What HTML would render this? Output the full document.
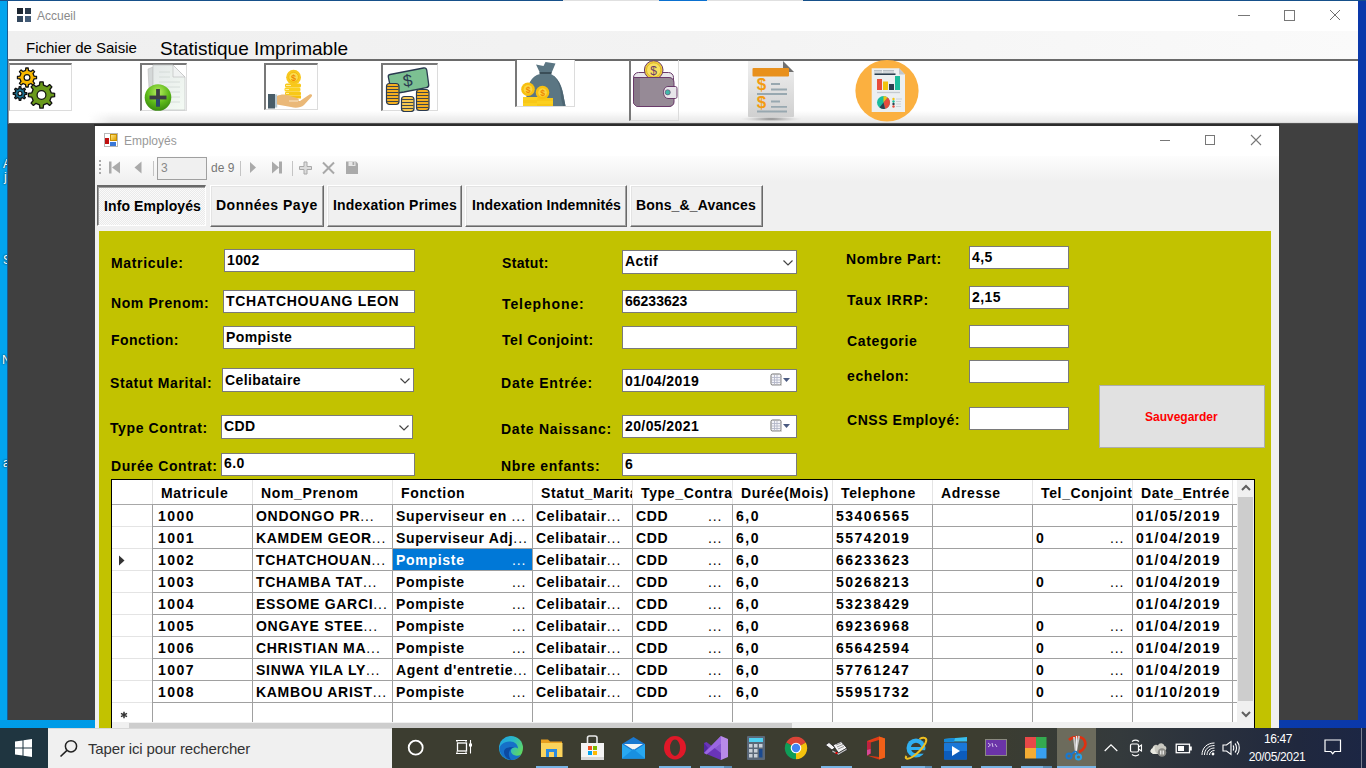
<!DOCTYPE html><html><head><meta charset="utf-8"><style>
*{margin:0;padding:0;box-sizing:border-box}
html,body{width:1366px;height:768px;overflow:hidden;background:#404040;font-family:"Liberation Sans",sans-serif}
.a{position:absolute}
.lbl{position:absolute;font-weight:bold;font-size:14px;line-height:16px;letter-spacing:0.35px;color:#000;white-space:nowrap}
.tx{position:absolute;background:#fff;border:1px solid #7a7a7a;font-weight:bold;font-size:14px;line-height:16px;letter-spacing:0.4px;white-space:nowrap;overflow:hidden;color:#000}
.tx span{position:absolute;left:2px}
.btn{position:absolute;background:#f0f0f0;border-top:1px solid #fff;border-left:1px solid #fff;border-right:1px solid #696969;border-bottom:1px solid #696969;box-shadow:inset -1px -1px 0 #a0a0a0, inset 1px 1px 0 #e3e3e3;font-weight:bold;font-size:14px;line-height:16px;white-space:nowrap;color:#000}
.btn span{position:absolute}
.cell{position:absolute;font-weight:bold;font-size:14px;line-height:16px;white-space:nowrap;color:#000;letter-spacing:0.7px}
.num{letter-spacing:1.5px}
.el{font-weight:normal;letter-spacing:0.9px}
</style></head><body>
<div class="a" style="left:0;top:0;width:8px;height:728px;background:#02a4ee"></div>
<div class="a" style="left:1358px;top:0;width:8px;height:728px;background:#0a38aa"></div>
<div class="a" style="left:0;top:150px;width:8px;height:330px;overflow:hidden;font-size:12px;line-height:14px;color:#fff;text-shadow:0 0 2px #000"><div class="a" style="left:3px;top:7px">A</div><div class="a" style="left:4px;top:20px">j</div><div class="a" style="left:3px;top:103px">S</div><div class="a" style="left:2px;top:203px">N</div><div class="a" style="left:3px;top:306px">a</div></div>
<div class="a" style="left:0;top:720px;width:1366px;height:8px;background:linear-gradient(90deg,#009ce8,#0090dc 45%,#0a40aa 85%,#0a38aa)"></div>
<div class="a" style="left:0;top:0;width:1366px;height:1px;background:#16508a"></div>
<div class="a" style="left:563px;top:0;width:96px;height:1px;background:#e0e0e0"></div>
<div class="a" style="left:659px;top:0;width:48px;height:1px;background:#0a70d0"></div>
<div class="a" style="left:707px;top:0;width:96px;height:1px;background:#e0e0e0"></div>
<div class="a" style="left:7px;top:0;width:1px;height:720px;background:#1a5a90"></div>
<div class="a" style="left:8px;top:1px;width:1350px;height:30px;background:#fff"></div>
<div class="a" style="left:17px;top:8px;width:6px;height:6px;background:#1c2530"></div>
<div class="a" style="left:25px;top:8px;width:6px;height:6px;background:#2a3a4c"></div>
<div class="a" style="left:17px;top:16px;width:6px;height:6px;background:#34485e"></div>
<div class="a" style="left:25px;top:16px;width:6px;height:6px;background:#445c78"></div>
<div class="a" style="left:37px;top:9px;font-size:12px;line-height:14px;color:#8a8a8a">Accueil</div>
<div class="a" style="left:1238px;top:15px;width:12px;height:1px;background:#777"></div>
<div class="a" style="left:1284px;top:10px;width:11px;height:11px;border:1px solid #777"></div>
<svg class="a" style="left:1329px;top:9px" width="13" height="13"><path d="M1 1L11 11M11 1L1 11" stroke="#707070" stroke-width="1"/></svg>
<div class="a" style="left:8px;top:31px;width:1350px;height:29px;background:linear-gradient(90deg,#efefef,#f3f3f3 50%,#fafafa)"></div>
<div class="a" style="left:26px;top:39px;font-size:15px;line-height:17px;color:#000">Fichier de Saisie</div>
<div class="a" style="left:160px;top:38px;font-size:19px;line-height:21px;color:#000">Statistique Imprimable</div>
<div class="a" style="left:8px;top:59px;width:1350px;height:65px;background:#fff;border-top:2px solid #6a6a6a;border-left:1px solid #9a9a9a;border-bottom:1px solid #555"></div>
<div class="a" style="left:88px;top:111px;width:1270px;height:11px;background:linear-gradient(180deg,rgba(255,255,255,0),#e8e8e8);-webkit-mask-image:linear-gradient(90deg,transparent,#000 24px)"></div>
<div class="a" style="left:88px;top:122px;width:1270px;height:1px;background:#dcdcdc;-webkit-mask-image:linear-gradient(90deg,transparent,#000 24px)"></div>
<div class="a" style="left:9px;top:63px;width:63px;height:48px;border-top:2px solid #787878;border-left:1px solid #a0a0a0;border-right:1px solid #dcdcdc;border-bottom:1px solid #dcdcdc;background:#fff"></div>
<div class="a" style="left:140px;top:63px;width:47px;height:48px;border-top:2px solid #787878;border-left:2px solid #787878;border-right:1px solid #dcdcdc;border-bottom:1px solid #dcdcdc;background:#fff"></div>
<div class="a" style="left:264px;top:63px;width:54px;height:47px;border-top:2px solid #787878;border-left:2px solid #787878;border-right:1px solid #dcdcdc;border-bottom:1px solid #dcdcdc;background:#fff"></div>
<div class="a" style="left:381px;top:63px;width:57px;height:48px;border-top:2px solid #787878;border-left:2px solid #787878;border-right:1px solid #dcdcdc;border-bottom:1px solid #dcdcdc;background:#fff"></div>
<div class="a" style="left:515px;top:60px;width:60px;height:47px;border-top:none;border-left:2px solid #787878;border-right:1px solid #dcdcdc;border-bottom:1px solid #dcdcdc;background:#fff"></div>
<svg class="a" style="left:8px;top:60px" width="64" height="54"><path d="M17.54 10.45 L17.80 7.98 L20.20 7.98 L20.46 10.45 L22.95 11.48 L24.88 9.91 L26.59 11.62 L25.02 13.55 L26.05 16.04 L28.52 16.30 L28.52 18.70 L26.05 18.96 L25.02 21.45 L26.59 23.38 L24.88 25.09 L22.95 23.52 L20.46 24.55 L20.20 27.02 L17.80 27.02 L17.54 24.55 L15.05 23.52 L13.12 25.09 L11.41 23.38 L12.98 21.45 L11.95 18.96 L9.48 18.70 L9.48 16.30 L11.95 16.04 L12.98 13.55 L11.41 11.62 L13.12 9.91 L15.05 11.48Z" fill="#f8b800" stroke="#111" stroke-width="1.3" stroke-linejoin="round"/><circle cx="19" cy="17.5" r="2.9" fill="#fff" stroke="#111" stroke-width="1.2"/><path d="M10.99 28.60 L11.15 26.75 L12.85 26.75 L13.01 28.60 L14.75 29.32 L16.17 28.13 L17.37 29.33 L16.18 30.75 L16.90 32.49 L18.75 32.65 L18.75 34.35 L16.90 34.51 L16.18 36.25 L17.37 37.67 L16.17 38.87 L14.75 37.68 L13.01 38.40 L12.85 40.25 L11.15 40.25 L10.99 38.40 L9.25 37.68 L7.83 38.87 L6.63 37.67 L7.82 36.25 L7.10 34.51 L5.25 34.35 L5.25 32.65 L7.10 32.49 L7.82 30.75 L6.63 29.33 L7.83 28.13 L9.25 29.32Z" fill="#1a7090" stroke="#111" stroke-width="1.3" stroke-linejoin="round"/><circle cx="12" cy="33.5" r="2.0" fill="#fff" stroke="#111" stroke-width="1.2"/><path d="M31.47 25.21 L31.85 21.90 L35.15 21.90 L35.53 25.21 L38.99 26.64 L41.59 24.57 L43.93 26.91 L41.86 29.51 L43.29 32.97 L46.60 33.35 L46.60 36.65 L43.29 37.03 L41.86 40.49 L43.93 43.09 L41.59 45.43 L38.99 43.36 L35.53 44.79 L35.15 48.10 L31.85 48.10 L31.47 44.79 L28.01 43.36 L25.41 45.43 L23.07 43.09 L25.14 40.49 L23.71 37.03 L20.40 36.65 L20.40 33.35 L23.71 32.97 L25.14 29.51 L23.07 26.91 L25.41 24.57 L28.01 26.64Z" fill="#6a9a1c" stroke="#111" stroke-width="1.3" stroke-linejoin="round"/><circle cx="33.5" cy="35" r="4.4" fill="#fff" stroke="#111" stroke-width="1.2"/></svg>
<svg class="a" style="left:140px;top:63px" width="47" height="49"><defs><linearGradient id="dg" x1="0" y1="0" x2="1" y2="1"><stop offset="0" stop-color="#e4e8e8"/><stop offset="1" stop-color="#f4fbf4"/></linearGradient><radialGradient id="gg" cx="0.5" cy="0.3" r="0.7"><stop offset="0" stop-color="#b8ee60"/><stop offset="0.6" stop-color="#5cb818"/><stop offset="1" stop-color="#3a8a10"/></radialGradient></defs><path d="M8 6L13 4V44L10 44Z" fill="#d4d8d8" stroke="#bbb" stroke-width="0.6"/><path d="M13 2H33L45 14V47H13Z" fill="url(#dg)" stroke="#c4c8c8" stroke-width="0.8"/><path d="M33 2V14H45Z" fill="#f0f2f2" stroke="#bbb" stroke-width="0.6"/><path d="M19 9H30M19 14H30M19 19H40M19 24H40M19 29H40M19 34H40M19 39H40" stroke="#d0d8d4" stroke-width="0.8"/><circle cx="18" cy="34.5" r="13.3" fill="url(#gg)"/><path d="M9.5 34.5H26.5" stroke="#3c3c44" stroke-width="3.8"/><path d="M18 26V43.5" stroke="#3c3c44" stroke-width="3.8"/><path d="M18 36V43.5" stroke="#2a4870" stroke-width="3.8"/></svg>
<svg class="a" style="left:264px;top:63px" width="54" height="47"><rect x="21" y="20.5" width="16" height="4" rx="1.5" fill="#f8c818"/><rect x="20.5" y="24.5" width="16" height="4" rx="1.5" fill="#fbd020"/><rect x="21" y="28.5" width="16" height="4" rx="1.5" fill="#f8c818"/><rect x="21" y="32.5" width="16" height="3" fill="#f6c010"/><path d="M22 22.5H27M21.5 26.5H25M22 30.5H25" stroke="#fff3b0" stroke-width="0.9"/><circle cx="29.6" cy="14.2" r="7.4" fill="#f8c820"/><circle cx="29.6" cy="14.2" r="4.8" fill="#fbdc50" stroke="#f0b800" stroke-width="0.8"/><text x="29.6" y="17.6" font-family="Liberation Sans" font-weight="bold" font-size="9" fill="#f08a00" text-anchor="middle">$</text><rect x="4" y="31" width="7" height="14.5" fill="#485c68"/><rect x="11" y="31.5" width="2.2" height="13" fill="#b8c8d0"/><path d="M13 33C17 31 22 31 26 33L33 35C36 36 35 39 32 38.5L25 38H36L45.5 31.5C47.5 30.5 49 32 47.5 33.8L40 42C37 44.5 32 45.5 27 44L13 41.5Z" fill="#eab878"/><path d="M25 38H34" stroke="#fff4e0" stroke-width="0.8"/></svg>
<svg class="a" style="left:381px;top:63px" width="58" height="49"><path d="M9 11.5L42.5 5C44.5 4.7 45.5 5.5 45.8 7.3L47.7 21.5C48 23.5 47.2 24.3 45.3 24.6L23 29L13.5 30.5C11.5 30.8 10.5 30 10.2 28.2L7.3 14C7 12.3 7.5 11.8 9 11.5Z" fill="#7cc092" stroke="#2a3a50" stroke-width="1.3"/><text x="26.5" y="23.5" font-family="Liberation Sans" font-size="17" fill="#2a3a50" text-anchor="middle" transform="rotate(-8 26.5 17)">$</text><rect x="5.5" y="20.5" width="12.5" height="21" rx="3" fill="#f5b020" stroke="#2a3a50" stroke-width="1.2"/><path d="M6.1 23.5H17.4" stroke="#2a3a50" stroke-width="0.9" fill="none"/><path d="M6.1 26.5H17.4" stroke="#2a3a50" stroke-width="0.9" fill="none"/><path d="M6.1 29.5H17.4" stroke="#2a3a50" stroke-width="0.9" fill="none"/><path d="M6.1 32.5H17.4" stroke="#2a3a50" stroke-width="0.9" fill="none"/><path d="M6.1 35.5H17.4" stroke="#2a3a50" stroke-width="0.9" fill="none"/><path d="M6.1 38.5H17.4" stroke="#2a3a50" stroke-width="0.9" fill="none"/><rect x="20.5" y="33.5" width="12.5" height="15" rx="3" fill="#f6c850" stroke="#2a3a50" stroke-width="1.2"/><path d="M21.1 36.5H32.4" stroke="#2a3a50" stroke-width="0.9" fill="none"/><path d="M21.1 39.5H32.4" stroke="#2a3a50" stroke-width="0.9" fill="none"/><path d="M21.1 42.5H32.4" stroke="#2a3a50" stroke-width="0.9" fill="none"/><path d="M21.1 45.5H32.4" stroke="#2a3a50" stroke-width="0.9" fill="none"/><rect x="35.5" y="26.5" width="12.5" height="21" rx="3" fill="#f5b020" stroke="#2a3a50" stroke-width="1.2"/><path d="M36.1 29.5H47.4" stroke="#2a3a50" stroke-width="0.9" fill="none"/><path d="M36.1 32.5H47.4" stroke="#2a3a50" stroke-width="0.9" fill="none"/><path d="M36.1 35.5H47.4" stroke="#2a3a50" stroke-width="0.9" fill="none"/><path d="M36.1 38.5H47.4" stroke="#2a3a50" stroke-width="0.9" fill="none"/><path d="M36.1 41.5H47.4" stroke="#2a3a50" stroke-width="0.9" fill="none"/><path d="M36.1 44.5H47.4" stroke="#2a3a50" stroke-width="0.9" fill="none"/></svg>
<svg class="a" style="left:515px;top:60px" width="60" height="47"><path d="M21 4.5L28.5 6L30.5 2L40.5 3.5L36.5 13H25Z" fill="#5b7683"/><path d="M24.5 13H36.5" stroke="#3a4e58" stroke-width="2"/><path d="M25 14C16 16 12 26 11.5 34L11 46H50.5L49.5 41C48 33 47 20 36 14Z" fill="#5b7683"/><path d="M36 14C43 18 46 28 46 38L48 46H50.5L49.5 41C48 33 46 19 36 14Z" fill="#4d6572"/><rect x="8" y="37" width="16" height="3" fill="#fbd020"/><rect x="8" y="40" width="16" height="3" fill="#f8c818"/><rect x="8" y="43" width="16" height="3" fill="#fbd020"/><rect x="22" y="38" width="16" height="3" fill="#f8c818"/><rect x="22" y="41" width="16" height="3" fill="#fbd020"/><rect x="22" y="44" width="16" height="2" fill="#f8c818"/><circle cx="13" cy="29.2" r="6.8" fill="#f8c010"/><circle cx="13" cy="29.2" r="4.3" fill="#fbd640"/><text x="13" y="32.5" font-family="Liberation Sans" font-weight="bold" font-size="8.5" fill="#f08a00" text-anchor="middle">$</text><circle cx="27.5" cy="32.5" r="6.8" fill="#f8c010"/><circle cx="27.5" cy="32.5" r="4.3" fill="#fbd640"/><text x="27.5" y="35.8" font-family="Liberation Sans" font-weight="bold" font-size="8.5" fill="#f08a00" text-anchor="middle">$</text></svg>
<svg class="a" style="left:629px;top:58px" width="52" height="64"><rect x="4.5" y="14.5" width="40" height="34" rx="5" fill="#e8e6ea" stroke="#6a3a6a" stroke-width="1"/><circle cx="24.7" cy="12" r="9.3" fill="#f0cc40" stroke="#6a3a6a" stroke-width="1"/><circle cx="24.7" cy="12" r="7.2" fill="#f8e060" stroke="#d8b020" stroke-width="0.8"/><text x="24.7" y="16.5" font-family="Liberation Sans" font-size="12" fill="#6a3a6a" text-anchor="middle">$</text><path d="M4.5 19.5H40C43 19.5 45 21.5 45 24.5V44C45 46.5 43 48.5 40 48.5H10C7 48.5 4.5 46.5 4.5 43.5Z" fill="#968a96" stroke="#6a3a6a" stroke-width="1"/><path d="M5 20V44C5 46 7 48 9 48H11V20Z" fill="#887a88"/><path d="M39 28.5H46.5C47.5 28.5 48 29.5 48 30.5V38.5C48 39.5 47.5 40.5 46.5 40.5H39C36.5 40.5 34.5 38 34.5 34.5C34.5 31 36.5 28.5 39 28.5Z" fill="#e8e6ea" stroke="#6a3a6a" stroke-width="1"/><circle cx="38.7" cy="34.3" r="2.6" fill="#40b8a8" stroke="#6a3a6a" stroke-width="0.6"/></svg>
<div class="a" style="left:629px;top:60px;width:50px;height:61px;border-left:2px solid #787878;border-right:1px solid #dcdcdc;border-bottom:1px solid #dcdcdc"></div>
<svg class="a" style="left:738px;top:60px" width="66" height="64"><defs><linearGradient id="pg" x1="0" y1="0" x2="0" y2="1"><stop offset="0" stop-color="#f0f0f0"/><stop offset="1" stop-color="#d0d0d0"/></linearGradient><radialGradient id="sh" cx="0.5" cy="0.5" r="0.5"><stop offset="0" stop-color="#808080"/><stop offset="1" stop-color="#d0d0d0" stop-opacity="0"/></radialGradient></defs><ellipse cx="33" cy="59" rx="31" ry="3" fill="url(#sh)"/><path d="M10 1H45L56 12V56C56 56.5 55.5 57 55 57H11C10.5 57 10 56.5 10 56Z" fill="url(#pg)"/><path d="M45 1L56 12H45Z" fill="#707070"/><rect x="14.5" y="8" width="36.5" height="8.5" rx="1" fill="#e8901c"/><text x="23.5" y="30" font-family="Liberation Sans" font-weight="bold" font-size="17" fill="#f39c12" text-anchor="middle">$</text><text x="23.5" y="47.5" font-family="Liberation Sans" font-weight="bold" font-size="17" fill="#f39c12" text-anchor="middle">$</text><path d="M33 24H42M33 29.5H49M19 34H49M33 41.5H42M33 46.8H49M19 51.5H49" stroke="#98a8b0" stroke-width="1.8"/></svg>
<svg class="a" style="left:854px;top:58px" width="66" height="66"><ellipse cx="33" cy="32.7" rx="31.6" ry="30.8" fill="#fbb040"/><path d="M17.7 10.2H45L51 16.5V54H17.7Z" fill="#eceff1"/><path d="M45 10.2L51 16.5H45Z" fill="#c0c6cc"/><path d="M20 12.5H28M29 12.5H40M20 14H28M29 14H40" stroke="#b8bec4" stroke-width="1"/><path d="M20.5 16.2H41.5" stroke="#2c3e50" stroke-width="1.6"/><rect x="23" y="21" width="5" height="11" fill="#e74c3c"/><rect x="29" y="23.5" width="5" height="8.5" fill="#f1c40f"/><rect x="35" y="26" width="5" height="6" fill="#2c3e50"/><rect x="41" y="18" width="5" height="14" fill="#1abc9c"/><path d="M23 34.5H46" stroke="#c4cacf" stroke-width="1.3"/><circle cx="29.5" cy="44.5" r="6.5" fill="#1abc9c"/><path d="M29.5 44.5L29.5 38A6.5 6.5 0 0 1 33.6 39.5Z" fill="#f1c40f"/><path d="M29.5 44.5L33.6 39.5A6.5 6.5 0 0 1 31 50.8Z" fill="#e74c3c"/><path d="M29.5 44.5L31 50.8A6.5 6.5 0 0 1 25.5 49.5Z" fill="#2c3e50"/><circle cx="39.5" cy="41" r="1.2" fill="#f1c40f"/><circle cx="39.5" cy="43.5" r="1.2" fill="#1abc9c"/><circle cx="39.5" cy="46" r="1.2" fill="#2c3e50"/><circle cx="39.5" cy="48.5" r="1.2" fill="#e74c3c"/><path d="M42 41H48M42 43.5H47M42 46H47M42 48.5H47" stroke="#c4cacf" stroke-width="0.8"/></svg>
<div class="a" style="left:94px;top:124px;width:1186px;height:2px;background:#2c2c2c"></div>
<div class="a" style="left:95px;top:126px;width:1184px;height:602px;background:#f0f0f0"></div>
<div class="a" style="left:95px;top:126px;width:1184px;height:30px;background:#fff"></div>
<div class="a" style="left:104px;top:133px;width:14px;height:14px;border:1px solid #b8b8b8;background:#fff"></div>
<div class="a" style="left:110px;top:134px;width:7px;height:7px;background:linear-gradient(135deg,#ffe680,#e0a000);border:1px solid #c89000"></div>
<div class="a" style="left:105px;top:138px;width:4px;height:6px;background:#c01010"></div>
<div class="a" style="left:110px;top:142px;width:6px;height:4px;background:#3a78d8"></div>
<div class="a" style="left:124px;top:134px;font-size:12px;line-height:14px;color:#999">Employés</div>
<div class="a" style="left:1160px;top:140px;width:10px;height:1px;background:#777"></div>
<div class="a" style="left:1205px;top:135px;width:10px;height:10px;border:1px solid #777"></div>
<svg class="a" style="left:1250px;top:134px" width="12" height="12"><path d="M1 1L11 11M11 1L1 11" stroke="#777" stroke-width="1.1"/></svg>
<div class="a" style="left:95px;top:156px;width:1184px;height:26px;background:linear-gradient(180deg,#fdfdfd,#f0f0f0)"></div>
<div class="a" style="left:99px;top:160px;width:2px;height:2px;background:#a8a8a8"></div>
<div class="a" style="left:99px;top:164px;width:2px;height:2px;background:#a8a8a8"></div>
<div class="a" style="left:99px;top:168px;width:2px;height:2px;background:#a8a8a8"></div>
<div class="a" style="left:99px;top:172px;width:2px;height:2px;background:#a8a8a8"></div>
<svg class="a" style="left:106px;top:159px" width="260" height="18"><rect x="3" y="2.5" width="2.5" height="12" fill="#aaaaaa"/><path d="M14 2.5L6 8.5L14 14.5Z" fill="#aaaaaa"/><path d="M35.5 2.5L28.5 8.5L35.5 14.5Z" fill="#aaaaaa"/><rect x="47" y="2" width="1" height="15" fill="#c4c4c4"/><path d="M144 3L150 8.5L144 14Z" fill="#aaaaaa"/><path d="M166 2.5L173 8.5L166 14.5Z" fill="#aaaaaa"/><rect x="173" y="2.5" width="3" height="12" fill="#aaaaaa"/><rect x="134" y="2" width="1" height="15" fill="#c4c4c4"/><rect x="186" y="2" width="1" height="15" fill="#c4c4c4"/><path d="M198 3H201V7.5H205.5V10.5H201V15H198V10.5H193.5V7.5H198Z" fill="#dcdcdc" stroke="#a8a8a8" stroke-width="1"/><path d="M217 3.5L228 14.5M228 3.5L217 14.5" stroke="#a8a8a8" stroke-width="2"/><path d="M240 2.5H250L252 4.5V15H240Z" fill="#aaaaaa"/><rect x="242.5" y="2.5" width="7" height="4.5" fill="#e8e8e8"/><rect x="246.5" y="3" width="1.8" height="3" fill="#aaaaaa"/></svg>
<div class="a" style="left:157px;top:157px;width:50px;height:23px;border:1px solid #a0a0a0;background:#f0f0f0;font-size:12px;line-height:20px;color:#888;padding-left:3px">3</div>
<div class="a" style="left:211px;top:161px;font-size:12px;line-height:14px;color:#777">de 9</div>
<div class="a" style="left:97px;top:185px;width:109px;height:41px;background:repeating-conic-gradient(#fafafa 0 25%,#eaeaea 0 50%) 0 0/2px 2px;border-top:2px solid #696969;border-left:1px solid #696969;border-right:1px solid #fff;border-bottom:1px solid #fff;box-shadow:inset 1px 1px 0 #a0a0a0"></div>
<div class="lbl" style="left:104px;top:198px;letter-spacing:0.1px">Info Employés</div>
<div class="btn" style="left:210px;top:185px;width:114px;height:42px"></div>
<div class="lbl" style="left:216px;top:197px;letter-spacing:0.5px">Données Paye</div>
<div class="btn" style="left:327px;top:185px;width:135px;height:42px"></div>
<div class="lbl" style="left:333px;top:197px;letter-spacing:0.2px">Indexation Primes</div>
<div class="btn" style="left:465px;top:185px;width:162px;height:42px"></div>
<div class="lbl" style="left:472px;top:197px;letter-spacing:0.05px">Indexation Indemnités</div>
<div class="btn" style="left:630px;top:185px;width:133px;height:42px"></div>
<div class="lbl" style="left:636px;top:197px;letter-spacing:0.15px">Bons_&amp;_Avances</div>
<div class="a" style="left:99px;top:231px;width:1172px;height:497px;background:#c2c200"></div>
<div class="lbl" style="left:111px;top:255px;letter-spacing:0.65px">Matricule:</div>
<div class="tx" style="left:224px;top:249px;width:191px;height:23px"><span style="top:2px;letter-spacing:0.4px">1002</span></div>
<div class="lbl" style="left:111px;top:295px;letter-spacing:0.6px">Nom Prenom:</div>
<div class="tx" style="left:223px;top:290px;width:192px;height:23px"><span style="top:2px;letter-spacing:0.7px">TCHATCHOUANG LEON</span></div>
<div class="lbl" style="left:111px;top:332px;letter-spacing:0.45px">Fonction:</div>
<div class="tx" style="left:223px;top:326px;width:192px;height:23px"><span style="top:2px;letter-spacing:0.4px">Pompiste</span></div>
<div class="lbl" style="left:110px;top:375px;letter-spacing:0.6px">Statut Marital:</div>
<div class="tx" style="left:222px;top:368px;width:192px;height:24px"><span style="top:3px;letter-spacing:0.4px">Celibataire</span></div>
<svg class="a" style="left:400px;top:378px" width="10" height="6"><path d="M0.5 0.5L5 5L9.5 0.5" stroke="#444" stroke-width="1.2" fill="none"/></svg>
<div class="lbl" style="left:110px;top:420px;letter-spacing:0.6px">Type Contrat:</div>
<div class="tx" style="left:221px;top:415px;width:192px;height:24px"><span style="top:2px;letter-spacing:0.4px">CDD</span></div>
<svg class="a" style="left:399px;top:425px" width="10" height="6"><path d="M0.5 0.5L5 5L9.5 0.5" stroke="#444" stroke-width="1.2" fill="none"/></svg>
<div class="lbl" style="left:111px;top:458px;letter-spacing:0.6px">Durée Contrat:</div>
<div class="tx" style="left:221px;top:453px;width:194px;height:23px"><span style="top:1px;letter-spacing:0.4px">6.0</span></div>
<div class="lbl" style="left:502px;top:255px;letter-spacing:0.35px">Statut:</div>
<div class="tx" style="left:622px;top:250px;width:175px;height:24px"><span style="top:2px;letter-spacing:0.4px">Actif</span></div>
<svg class="a" style="left:783px;top:260px" width="10" height="6"><path d="M0.5 0.5L5 5L9.5 0.5" stroke="#444" stroke-width="1.2" fill="none"/></svg>
<div class="lbl" style="left:502px;top:296px;letter-spacing:0.9px">Telephone:</div>
<div class="tx" style="left:622px;top:290px;width:175px;height:23px"><span style="top:2px;letter-spacing:0.0px">66233623</span></div>
<div class="lbl" style="left:502px;top:332px;letter-spacing:0.55px">Tel Conjoint:</div>
<div class="tx" style="left:622px;top:326px;width:175px;height:23px"><span style="top:2px;letter-spacing:0.4px"></span></div>
<div class="lbl" style="left:501px;top:375px;letter-spacing:0.8px">Date Entrée:</div>
<div class="tx" style="left:622px;top:369px;width:175px;height:23px"><span style="top:3px;letter-spacing:0.4px">01/04/2019</span></div>
<svg class="a" style="left:770px;top:373px" width="22" height="14"><rect x="1" y="1" width="10" height="11" rx="1.5" fill="#f4f4f8" stroke="#707070" stroke-width="1"/><path d="M2 4.5H10M2 7H10M2 9.5H10M4.5 2V11.5M7 2V11.5" stroke="#b4b8c8" stroke-width="0.9"/><path d="M11.5 4V12.5H3" stroke="#c8c8c8" stroke-width="0.8" fill="none"/><path d="M13 5H20L16.5 9Z" fill="#4a5a80"/></svg>
<div class="lbl" style="left:501px;top:421px;letter-spacing:0.75px">Date Naissanc:</div>
<div class="tx" style="left:622px;top:415px;width:175px;height:23px"><span style="top:2px;letter-spacing:0.4px">20/05/2021</span></div>
<svg class="a" style="left:770px;top:419px" width="22" height="14"><rect x="1" y="1" width="10" height="11" rx="1.5" fill="#f4f4f8" stroke="#707070" stroke-width="1"/><path d="M2 4.5H10M2 7H10M2 9.5H10M4.5 2V11.5M7 2V11.5" stroke="#b4b8c8" stroke-width="0.9"/><path d="M11.5 4V12.5H3" stroke="#c8c8c8" stroke-width="0.8" fill="none"/><path d="M13 5H20L16.5 9Z" fill="#4a5a80"/></svg>
<div class="lbl" style="left:501px;top:458px;letter-spacing:0.7px">Nbre enfants:</div>
<div class="tx" style="left:622px;top:453px;width:175px;height:23px"><span style="top:2px;letter-spacing:0.4px">6</span></div>
<div class="lbl" style="left:846px;top:251px;letter-spacing:0.6px">Nombre Part:</div>
<div class="tx" style="left:969px;top:246px;width:100px;height:23px"><span style="top:2px;letter-spacing:0.4px">4,5</span></div>
<div class="lbl" style="left:847px;top:292px;letter-spacing:0.85px">Taux IRRP:</div>
<div class="tx" style="left:969px;top:286px;width:100px;height:23px"><span style="top:2px;letter-spacing:0.4px">2,15</span></div>
<div class="lbl" style="left:847px;top:333px;letter-spacing:0.65px">Categorie</div>
<div class="tx" style="left:969px;top:325px;width:100px;height:23px"><span style="top:3px;letter-spacing:0.4px"></span></div>
<div class="lbl" style="left:847px;top:368px;letter-spacing:0.6px">echelon:</div>
<div class="tx" style="left:969px;top:360px;width:100px;height:23px"><span style="top:4px;letter-spacing:0.4px"></span></div>
<div class="lbl" style="left:847px;top:412px;letter-spacing:0.55px">CNSS Employé:</div>
<div class="tx" style="left:969px;top:407px;width:100px;height:23px"><span style="top:1px;letter-spacing:0.4px"></span></div>
<div class="a" style="left:1099px;top:385px;width:166px;height:63px;background:#e1e1e1;border:1px solid #adadad"></div>
<div class="a" style="left:1145px;top:410px;font-weight:bold;font-size:12px;line-height:14px;color:#ff0000;letter-spacing:0px">Sauvegarder</div>
<div class="a" style="left:111px;top:479px;width:1144px;height:260px;background:#fff;border:1px solid #000"></div>
<div class="a" style="left:152px;top:480px;width:1px;height:24px;background:#e4e4e4"></div>
<div class="a" style="left:252px;top:480px;width:1px;height:24px;background:#e4e4e4"></div>
<div class="a" style="left:392px;top:480px;width:1px;height:24px;background:#e4e4e4"></div>
<div class="a" style="left:532px;top:480px;width:1px;height:24px;background:#e4e4e4"></div>
<div class="a" style="left:632px;top:480px;width:1px;height:24px;background:#e4e4e4"></div>
<div class="a" style="left:732px;top:480px;width:1px;height:24px;background:#e4e4e4"></div>
<div class="a" style="left:832px;top:480px;width:1px;height:24px;background:#e4e4e4"></div>
<div class="a" style="left:932px;top:480px;width:1px;height:24px;background:#e4e4e4"></div>
<div class="a" style="left:1032px;top:480px;width:1px;height:24px;background:#e4e4e4"></div>
<div class="a" style="left:1132px;top:480px;width:1px;height:24px;background:#e4e4e4"></div>
<div class="a" style="left:1232px;top:480px;width:1px;height:24px;background:#e4e4e4"></div>
<div class="a" style="left:112px;top:504px;width:1125px;height:1px;background:#a0a0a0"></div>
<div class="a" style="left:112px;top:504px;width:40px;height:1px;background:#a8a8a8"></div>
<div class="a" style="left:153px;top:480px;width:99px;height:24px;overflow:hidden"><div class="cell" style="left:8px;top:5px;letter-spacing:0.65px">Matricule</div></div>
<div class="a" style="left:253px;top:480px;width:139px;height:24px;overflow:hidden"><div class="cell" style="left:8px;top:5px;letter-spacing:0.65px">Nom_Prenom</div></div>
<div class="a" style="left:393px;top:480px;width:139px;height:24px;overflow:hidden"><div class="cell" style="left:8px;top:5px;letter-spacing:0.65px">Fonction</div></div>
<div class="a" style="left:533px;top:480px;width:99px;height:24px;overflow:hidden"><div class="cell" style="left:8px;top:5px;letter-spacing:0.65px">Statut_Marital</div></div>
<div class="a" style="left:633px;top:480px;width:99px;height:24px;overflow:hidden"><div class="cell" style="left:8px;top:5px;letter-spacing:0.65px">Type_Contrat</div></div>
<div class="a" style="left:733px;top:480px;width:99px;height:24px;overflow:hidden"><div class="cell" style="left:8px;top:5px;letter-spacing:0.65px">Durée(Mois)</div></div>
<div class="a" style="left:833px;top:480px;width:99px;height:24px;overflow:hidden"><div class="cell" style="left:8px;top:5px;letter-spacing:0.65px">Telephone</div></div>
<div class="a" style="left:933px;top:480px;width:99px;height:24px;overflow:hidden"><div class="cell" style="left:8px;top:5px;letter-spacing:0.65px">Adresse</div></div>
<div class="a" style="left:1033px;top:480px;width:99px;height:24px;overflow:hidden"><div class="cell" style="left:8px;top:5px;letter-spacing:0.65px">Tel_Conjoint</div></div>
<div class="a" style="left:1133px;top:480px;width:99px;height:24px;overflow:hidden"><div class="cell" style="left:8px;top:5px;letter-spacing:0.65px">Date_Entrée</div></div>
<div class="a" style="left:152px;top:526px;width:1085px;height:1px;background:#a0a0a0"></div>
<div class="a" style="left:112px;top:526px;width:40px;height:1px;background:#e4e4e4"></div>
<div class="a" style="left:152px;top:548px;width:1085px;height:1px;background:#a0a0a0"></div>
<div class="a" style="left:112px;top:548px;width:40px;height:1px;background:#e4e4e4"></div>
<div class="a" style="left:152px;top:570px;width:1085px;height:1px;background:#a0a0a0"></div>
<div class="a" style="left:112px;top:570px;width:40px;height:1px;background:#e4e4e4"></div>
<div class="a" style="left:152px;top:592px;width:1085px;height:1px;background:#a0a0a0"></div>
<div class="a" style="left:112px;top:592px;width:40px;height:1px;background:#e4e4e4"></div>
<div class="a" style="left:152px;top:614px;width:1085px;height:1px;background:#a0a0a0"></div>
<div class="a" style="left:112px;top:614px;width:40px;height:1px;background:#e4e4e4"></div>
<div class="a" style="left:152px;top:636px;width:1085px;height:1px;background:#a0a0a0"></div>
<div class="a" style="left:112px;top:636px;width:40px;height:1px;background:#e4e4e4"></div>
<div class="a" style="left:152px;top:658px;width:1085px;height:1px;background:#a0a0a0"></div>
<div class="a" style="left:112px;top:658px;width:40px;height:1px;background:#e4e4e4"></div>
<div class="a" style="left:152px;top:680px;width:1085px;height:1px;background:#a0a0a0"></div>
<div class="a" style="left:112px;top:680px;width:40px;height:1px;background:#e4e4e4"></div>
<div class="a" style="left:152px;top:702px;width:1085px;height:1px;background:#a0a0a0"></div>
<div class="a" style="left:112px;top:702px;width:40px;height:1px;background:#e4e4e4"></div>
<div class="a" style="left:152px;top:724px;width:1085px;height:1px;background:#a0a0a0"></div>
<div class="a" style="left:112px;top:724px;width:40px;height:1px;background:#e4e4e4"></div>
<div class="a" style="left:152px;top:505px;width:1px;height:217px;background:#a0a0a0"></div>
<div class="a" style="left:252px;top:505px;width:1px;height:217px;background:#a0a0a0"></div>
<div class="a" style="left:392px;top:505px;width:1px;height:217px;background:#a0a0a0"></div>
<div class="a" style="left:532px;top:505px;width:1px;height:217px;background:#a0a0a0"></div>
<div class="a" style="left:632px;top:505px;width:1px;height:217px;background:#a0a0a0"></div>
<div class="a" style="left:732px;top:505px;width:1px;height:217px;background:#a0a0a0"></div>
<div class="a" style="left:832px;top:505px;width:1px;height:217px;background:#a0a0a0"></div>
<div class="a" style="left:932px;top:505px;width:1px;height:217px;background:#a0a0a0"></div>
<div class="a" style="left:1032px;top:505px;width:1px;height:217px;background:#a0a0a0"></div>
<div class="a" style="left:1132px;top:505px;width:1px;height:217px;background:#a0a0a0"></div>
<div class="a" style="left:1232px;top:505px;width:1px;height:217px;background:#a0a0a0"></div>
<div class="a" style="left:152px;top:505px;width:1px;height:217px;background:#a0a0a0"></div>
<div class="a" style="left:393px;top:549px;width:139px;height:21px;background:#0078d7"></div>
<div class="cell num" style="left:158px;top:508px;color:#000">1000</div>
<div class="cell" style="left:256px;top:508px;color:#000">ONDONGO PR<span class="el">...</span></div>
<div class="cell" style="left:396px;top:508px;color:#000">Superviseur en <span class="el">...</span></div>
<div class="cell" style="left:536px;top:508px;color:#000">Celibatair<span class="el">...</span></div>
<div class="cell" style="left:636px;top:508px;color:#000">CDD</div>
<div class="cell num" style="left:736px;top:508px;color:#000">6,0</div>
<div class="cell num" style="left:836px;top:508px;color:#000">53406565</div>
<div class="cell num" style="left:1136px;top:508px;color:#000">01/05/2019</div>
<div class="cell el" style="left:708px;top:508px;color:#000">...</div>
<div class="cell num" style="left:158px;top:530px;color:#000">1001</div>
<div class="cell" style="left:256px;top:530px;color:#000">KAMDEM GEOR<span class="el">...</span></div>
<div class="cell" style="left:396px;top:530px;color:#000">Superviseur Adj<span class="el">...</span></div>
<div class="cell" style="left:536px;top:530px;color:#000">Celibatair<span class="el">...</span></div>
<div class="cell" style="left:636px;top:530px;color:#000">CDD</div>
<div class="cell num" style="left:736px;top:530px;color:#000">6,0</div>
<div class="cell num" style="left:836px;top:530px;color:#000">55742019</div>
<div class="cell num" style="left:1036px;top:530px;color:#000">0</div>
<div class="cell num" style="left:1136px;top:530px;color:#000">01/04/2019</div>
<div class="cell el" style="left:708px;top:530px;color:#000">...</div>
<div class="cell el" style="left:1110px;top:530px;color:#000">...</div>
<div class="cell num" style="left:158px;top:552px;color:#000">1002</div>
<div class="cell" style="left:256px;top:552px;color:#000">TCHATCHOUAN<span class="el">...</span></div>
<div class="cell" style="left:396px;top:552px;color:#fff">Pompiste</div>
<div class="cell" style="left:536px;top:552px;color:#000">Celibatair<span class="el">...</span></div>
<div class="cell" style="left:636px;top:552px;color:#000">CDD</div>
<div class="cell num" style="left:736px;top:552px;color:#000">6,0</div>
<div class="cell num" style="left:836px;top:552px;color:#000">66233623</div>
<div class="cell num" style="left:1136px;top:552px;color:#000">01/04/2019</div>
<div class="cell el" style="left:512px;top:552px;color:#fff">...</div>
<div class="cell el" style="left:708px;top:552px;color:#000">...</div>
<div class="cell num" style="left:158px;top:574px;color:#000">1003</div>
<div class="cell" style="left:256px;top:574px;color:#000">TCHAMBA TAT<span class="el">...</span></div>
<div class="cell" style="left:396px;top:574px;color:#000">Pompiste</div>
<div class="cell" style="left:536px;top:574px;color:#000">Celibatair<span class="el">...</span></div>
<div class="cell" style="left:636px;top:574px;color:#000">CDD</div>
<div class="cell num" style="left:736px;top:574px;color:#000">6,0</div>
<div class="cell num" style="left:836px;top:574px;color:#000">50268213</div>
<div class="cell num" style="left:1036px;top:574px;color:#000">0</div>
<div class="cell num" style="left:1136px;top:574px;color:#000">01/04/2019</div>
<div class="cell el" style="left:512px;top:574px;color:#000">...</div>
<div class="cell el" style="left:708px;top:574px;color:#000">...</div>
<div class="cell el" style="left:1110px;top:574px;color:#000">...</div>
<div class="cell num" style="left:158px;top:596px;color:#000">1004</div>
<div class="cell" style="left:256px;top:596px;color:#000">ESSOME GARCI<span class="el">...</span></div>
<div class="cell" style="left:396px;top:596px;color:#000">Pompiste</div>
<div class="cell" style="left:536px;top:596px;color:#000">Celibatair<span class="el">...</span></div>
<div class="cell" style="left:636px;top:596px;color:#000">CDD</div>
<div class="cell num" style="left:736px;top:596px;color:#000">6,0</div>
<div class="cell num" style="left:836px;top:596px;color:#000">53238429</div>
<div class="cell num" style="left:1136px;top:596px;color:#000">01/04/2019</div>
<div class="cell el" style="left:512px;top:596px;color:#000">...</div>
<div class="cell el" style="left:708px;top:596px;color:#000">...</div>
<div class="cell num" style="left:158px;top:618px;color:#000">1005</div>
<div class="cell" style="left:256px;top:618px;color:#000">ONGAYE STEE<span class="el">...</span></div>
<div class="cell" style="left:396px;top:618px;color:#000">Pompiste</div>
<div class="cell" style="left:536px;top:618px;color:#000">Celibatair<span class="el">...</span></div>
<div class="cell" style="left:636px;top:618px;color:#000">CDD</div>
<div class="cell num" style="left:736px;top:618px;color:#000">6,0</div>
<div class="cell num" style="left:836px;top:618px;color:#000">69236968</div>
<div class="cell num" style="left:1036px;top:618px;color:#000">0</div>
<div class="cell num" style="left:1136px;top:618px;color:#000">01/04/2019</div>
<div class="cell el" style="left:512px;top:618px;color:#000">...</div>
<div class="cell el" style="left:708px;top:618px;color:#000">...</div>
<div class="cell el" style="left:1110px;top:618px;color:#000">...</div>
<div class="cell num" style="left:158px;top:640px;color:#000">1006</div>
<div class="cell" style="left:256px;top:640px;color:#000">CHRISTIAN MA<span class="el">...</span></div>
<div class="cell" style="left:396px;top:640px;color:#000">Pompiste</div>
<div class="cell" style="left:536px;top:640px;color:#000">Celibatair<span class="el">...</span></div>
<div class="cell" style="left:636px;top:640px;color:#000">CDD</div>
<div class="cell num" style="left:736px;top:640px;color:#000">6,0</div>
<div class="cell num" style="left:836px;top:640px;color:#000">65642594</div>
<div class="cell num" style="left:1036px;top:640px;color:#000">0</div>
<div class="cell num" style="left:1136px;top:640px;color:#000">01/04/2019</div>
<div class="cell el" style="left:512px;top:640px;color:#000">...</div>
<div class="cell el" style="left:708px;top:640px;color:#000">...</div>
<div class="cell el" style="left:1110px;top:640px;color:#000">...</div>
<div class="cell num" style="left:158px;top:662px;color:#000">1007</div>
<div class="cell" style="left:256px;top:662px;color:#000">SINWA YILA LY<span class="el">...</span></div>
<div class="cell" style="left:396px;top:662px;color:#000">Agent d'entretie<span class="el">...</span></div>
<div class="cell" style="left:536px;top:662px;color:#000">Celibatair<span class="el">...</span></div>
<div class="cell" style="left:636px;top:662px;color:#000">CDD</div>
<div class="cell num" style="left:736px;top:662px;color:#000">6,0</div>
<div class="cell num" style="left:836px;top:662px;color:#000">57761247</div>
<div class="cell num" style="left:1036px;top:662px;color:#000">0</div>
<div class="cell num" style="left:1136px;top:662px;color:#000">01/04/2019</div>
<div class="cell el" style="left:708px;top:662px;color:#000">...</div>
<div class="cell el" style="left:1110px;top:662px;color:#000">...</div>
<div class="cell num" style="left:158px;top:684px;color:#000">1008</div>
<div class="cell" style="left:256px;top:684px;color:#000">KAMBOU ARIST<span class="el">...</span></div>
<div class="cell" style="left:396px;top:684px;color:#000">Pompiste</div>
<div class="cell" style="left:536px;top:684px;color:#000">Celibatair<span class="el">...</span></div>
<div class="cell" style="left:636px;top:684px;color:#000">CDD</div>
<div class="cell num" style="left:736px;top:684px;color:#000">6,0</div>
<div class="cell num" style="left:836px;top:684px;color:#000">55951732</div>
<div class="cell num" style="left:1036px;top:684px;color:#000">0</div>
<div class="cell num" style="left:1136px;top:684px;color:#000">01/10/2019</div>
<div class="cell el" style="left:512px;top:684px;color:#000">...</div>
<div class="cell el" style="left:708px;top:684px;color:#000">...</div>
<div class="cell el" style="left:1110px;top:684px;color:#000">...</div>
<svg class="a" style="left:118px;top:555px" width="8" height="11"><path d="M1 0.5L6.5 5.5L1 10.5Z" fill="#333"/></svg>
<svg class="a" style="left:120px;top:711px" width="8" height="8"><path d="M4 0.8V7.2M1 2.3L7 5.7M7 2.3L1 5.7" stroke="#333" stroke-width="1.5"/></svg>
<div class="a" style="left:1237px;top:480px;width:17px;height:242px;background:#f0f0f0"></div>
<div class="a" style="left:1238px;top:497px;width:15px;height:204px;background:#cdcdcd"></div>
<svg class="a" style="left:1241px;top:484px" width="10" height="7"><path d="M1 6L5 2L9 6" stroke="#606060" stroke-width="2" fill="none"/></svg>
<svg class="a" style="left:1241px;top:711px" width="10" height="7"><path d="M1 1L5 5L9 1" stroke="#606060" stroke-width="2" fill="none"/></svg>
<div class="a" style="left:112px;top:722px;width:1125px;height:6px;background:#f0f0f0"></div>
<div class="a" style="left:129px;top:723px;width:663px;height:5px;background:#cdcdcd"></div>
<div class="a" style="left:1237px;top:722px;width:17px;height:6px;background:#f0f0f0"></div>
<div class="a" style="left:0;top:728px;width:1366px;height:40px;background:linear-gradient(90deg,#3c3d30 0%,#3c3d30 72%,#343a3c 82%,#20283e 95%,#1c2644 100%)"></div>
<div class="a" style="left:0;top:728px;width:48px;height:40px;background:#1f3540"></div>
<div class="a" style="left:48px;top:728px;width:344px;height:40px;background:#f0f0f0;border-top:1px solid #d8d8d8"></div>
<svg class="a" style="left:15px;top:739px" width="18" height="18"><path d="M0 2.5L7.5 1.5V8.5H0Z M8.5 1.3L17 0V8.5H8.5Z M0 9.5H7.5V16.5L0 15.5Z M8.5 9.5H17V18L8.5 16.7Z" fill="#fff"/></svg>
<svg class="a" style="left:59px;top:739px" width="20" height="19"><circle cx="12" cy="7.3" r="5.6" stroke="#222" stroke-width="1.5" fill="none"/><path d="M8 11.3L1.5 17.5" stroke="#222" stroke-width="1.6"/></svg>
<div class="a" style="left:88px;top:740px;font-size:15px;line-height:17px;letter-spacing:-0.15px;color:#333">Taper ici pour rechercher</div>
<svg class="a" style="left:405px;top:737px" width="22" height="22"><circle cx="10.7" cy="10.7" r="7" stroke="#fff" stroke-width="1.8" fill="none"/></svg>
<svg class="a" style="left:455px;top:739px" width="18" height="17"><path d="M1 1.5H12M1 14.5H12" stroke="#fff" stroke-width="1.2"/><rect x="2.5" y="4" width="9" height="8" stroke="#fff" stroke-width="1.3" fill="none"/><path d="M2 1.5V3M11 1.5V3M2 12.5V14.5M11 12.5V14.5" stroke="#fff" stroke-width="1"/><path d="M15.5 1V14.5" stroke="#fff" stroke-width="1.1"/><rect x="14" y="4.5" width="3" height="3" fill="#fff"/></svg>
<svg class="a" style="left:498px;top:735px" width="26" height="26"><defs><linearGradient id="eg1" x1="0" y1="0" x2="1" y2="0.6"><stop offset="0" stop-color="#1ea0e8"/><stop offset="0.5" stop-color="#2ab8c8"/><stop offset="1" stop-color="#60d860"/></linearGradient></defs><circle cx="13" cy="13" r="12" fill="url(#eg1)"/><path d="M1.5 14C2 20 7 25 13.5 25C18 25 21.5 22.5 23 19.5C20 21.5 15.5 21 13.5 18C12 15.5 13.5 12.5 16.5 12.5C18 12.5 19.5 13 20 13.5C20 9 16 6 11.5 6.5C5.5 7 1.5 10 1.5 14Z" fill="#1670c8"/><path d="M6 17C6 21 9.5 24.5 13.5 25C10.5 22 10 18 12 15C13 13.5 14.5 12.7 16.5 12.5C12 11.5 6 12.5 6 17Z" fill="#0c4aa0"/></svg>
<svg class="a" style="left:540px;top:738px" width="24" height="20"><path d="M1 1.5H8L10 3.5H22V18.5H1Z" fill="#e8a020"/><rect x="1" y="5" width="21.5" height="14" fill="#fbd45c"/><path d="M6 19V11H17V19H14V14H9V19Z" fill="#2a8ae0"/></svg>
<div class="a" style="left:536px;top:766px;width:32px;height:2px;background:#78b4e4"></div>
<svg class="a" style="left:580px;top:735px" width="25" height="26"><path d="M7.5 8V3C7.5 1.8 8.3 1 9.5 1H15C16.2 1 17 1.8 17 3V8" stroke="#e8e8e8" stroke-width="1.6" fill="none"/><rect x="1" y="8" width="23" height="17" fill="#f4f4f4"/><rect x="1" y="22" width="23" height="3" fill="#d8d8d8"/><rect x="8" y="11" width="4" height="4" fill="#f25022"/><rect x="13" y="11" width="4" height="4" fill="#7fba00"/><rect x="8" y="16" width="4" height="4" fill="#00a4ef"/><rect x="13" y="16" width="4" height="4" fill="#ffb900"/></svg>
<svg class="a" style="left:621px;top:736px" width="26" height="24"><path d="M1 8L12.5 1L24 8V22.5H1Z" fill="#1a78d0"/><path d="M3 8H22L12.5 14Z" fill="#f4f4f4"/><path d="M1 8L12.5 15.5L24 8V22.5H1Z" fill="#28a8f0"/><path d="M1 22.5L12.5 13L24 22.5Z" fill="#1890e0"/></svg>
<svg class="a" style="left:662px;top:735px" width="26" height="26"><ellipse cx="13" cy="12.7" rx="11" ry="11.7" fill="#e01828"/><ellipse cx="13" cy="12.7" rx="5" ry="8.2" fill="#3c3d30"/></svg>
<div class="a" style="left:659px;top:766px;width:32px;height:2px;background:#78b4e4"></div>
<svg class="a" style="left:703px;top:735px" width="26" height="26"><path d="M18 1L25 4V22L18 25L6 13.5Z" fill="#b88ae8"/><path d="M18 1L18 25L8 15.5L18 8Z" fill="#8858d0"/><path d="M1 8L3.5 7L18 18V25L1 18Z" fill="#6a34b8"/><path d="M1 8V18L5 13Z" fill="#5028a0"/><path d="M1 18L3.5 19.5L18 8V1Z" fill="#9a66e0"/></svg>
<div class="a" style="left:700px;top:766px;width:24px;height:2px;background:#78b4e4"></div>
<div class="a" style="left:724px;top:766px;width:8px;height:2px;background:#5a8cb4"></div>
<svg class="a" style="left:746px;top:735px" width="20" height="26"><rect x="1" y="1" width="18" height="24" rx="1" fill="#5a6878"/><rect x="3" y="3" width="14" height="4" fill="#50d0f0"/><g fill="#c8d0d8"><rect x="3" y="9" width="3.5" height="3.5"/><rect x="8" y="9" width="3.5" height="3.5"/><rect x="13" y="9" width="3.5" height="3.5"/><rect x="3" y="14" width="3.5" height="3.5"/><rect x="8" y="14" width="3.5" height="3.5"/><rect x="3" y="19" width="3.5" height="3.5"/><rect x="8" y="19" width="3.5" height="3.5"/></g><rect x="13" y="14" width="3.5" height="8.5" fill="#1a4a90"/></svg>
<svg class="a" style="left:784px;top:736px" width="24" height="24"><path d="M12 12L2.2 6.5A11.3 11.3 0 0 1 21.8 6.5Z" fill="#db4437"/><path d="M12 12L21.8 6.5A11.3 11.3 0 0 1 12 23.3Z" fill="#f4c20d"/><path d="M12 12L12 23.3A11.3 11.3 0 0 1 2.2 6.5Z" fill="#0f9d58"/><circle cx="12" cy="12" r="5.3" fill="#fff"/><circle cx="12" cy="12" r="4.2" fill="#4285f4"/></svg>
<svg class="a" style="left:824px;top:740px" width="24" height="16"><path d="M1.5 5L5 2.5L11 7.5L8 10Z" fill="#f4f4f4" stroke="#222" stroke-width="0.8"/><path d="M9 5L17 1.5L23 8L14.5 13Z" fill="#f4f4f4" stroke="#222" stroke-width="0.8"/><path d="M8 10L14.5 13L23 8V10L14.5 15L8 12Z" fill="#ccc" stroke="#222" stroke-width="0.6"/><path d="M12 5L17 3M13 7L19 4.5M14 9L20 6.5" stroke="#555" stroke-width="0.6"/><rect x="11.5" y="12" width="2" height="2" fill="#d00"/></svg>
<div class="a" style="left:821px;top:766px;width:31px;height:2px;background:#78b4e4"></div>
<svg class="a" style="left:866px;top:736px" width="20" height="24"><defs><linearGradient id="og" x1="0" y1="0" x2="1" y2="1"><stop offset="0" stop-color="#e84018"/><stop offset="1" stop-color="#d03010"/></linearGradient></defs><path d="M1 5L13 0.5L19 2.5V21.5L13 23.5L1 19.5L13 21V4L4.5 6.5V17.5L1 19.5Z" fill="url(#og)"/><path d="M13 0.5L19 2.5V21.5L13 23.5Z" fill="#f06018"/><path d="M1 5L4.5 6.5V17.5L1 19.5Z" fill="#c02040"/><path d="M1 14L4.5 13V17.5L1 19.5Z" fill="#d84898"/></svg>
<svg class="a" style="left:903px;top:735px" width="26" height="26"><circle cx="13" cy="13" r="9.5" fill="#30b0f0"/><circle cx="13" cy="13" r="5.2" fill="#3c3d30"/><rect x="6" y="12" width="14" height="3" fill="#30b0f0"/><rect x="13" y="15.2" width="9" height="3.5" fill="#3c3d30"/><path d="M3.5 21C1 24 5 25 10 21.5C15 18 20 13 22.5 8C25 3 21 1.5 16.5 4" stroke="#f0c020" stroke-width="2" fill="none"/></svg>
<div class="a" style="left:901px;top:766px;width:24px;height:2px;background:#78b4e4"></div>
<div class="a" style="left:925px;top:766px;width:7px;height:2px;background:#5a8cb4"></div>
<svg class="a" style="left:943px;top:736px" width="26" height="25"><path d="M1 3L24 1V5.5H1Z" fill="#38c0f0"/><path d="M1 3L12 2L11 6H1Z" fill="#1488d8"/><rect x="1" y="6.5" width="23" height="17" rx="1" fill="#1a78d8"/><rect x="1" y="15" width="23" height="8.5" fill="#0c5cbc"/><path d="M9 10L17 15L9 20Z" fill="#fff"/></svg>
<div class="a" style="left:941px;top:766px;width:31px;height:2px;background:#78b4e4"></div>
<svg class="a" style="left:985px;top:739px" width="22" height="17"><rect x="0.5" y="0.5" width="21" height="16" fill="#6b34a8" stroke="#8a8a80" stroke-width="1"/><path d="M3 4L5.5 6L3 8M7 4L8 8M10 5L12 8" stroke="#e0d0f0" stroke-width="0.9" fill="none"/></svg>
<div class="a" style="left:981px;top:766px;width:31px;height:2px;background:#78b4e4"></div>
<svg class="a" style="left:1025px;top:737px" width="22" height="22"><rect x="0" y="0" width="11" height="11" fill="#e84848"/><rect x="11" y="0" width="10.5" height="11" fill="#34aa50"/><rect x="0" y="11" width="11" height="10.5" fill="#f4ac34"/><rect x="11" y="11" width="10.5" height="10.5" fill="#38a0f0"/></svg>
<div class="a" style="left:1021px;top:766px;width:22px;height:2px;background:#78b4e4"></div>
<div class="a" style="left:1043px;top:766px;width:9px;height:2px;background:#5a8cb4"></div>
<div class="a" style="left:1057px;top:728px;width:39px;height:40px;background:#6c6b5c"></div>
<svg class="a" style="left:1065px;top:735px" width="24" height="26"><path d="M4 5C8 1 17 1 19.5 5.5C22 10 19 15 14 17" stroke="#e03010" stroke-width="2.6" fill="none"/><path d="M9 2L11 18M14 1L10.5 18" stroke="#c8c8c8" stroke-width="2"/><path d="M11.5 1V17" stroke="#f0f0f0" stroke-width="1.2"/><circle cx="4" cy="21" r="2.6" stroke="#1878d0" stroke-width="2" fill="none"/><circle cx="13.5" cy="22" r="2.6" stroke="#28a0e8" stroke-width="2" fill="none"/><path d="M6 19.5L10.5 16M12.5 19.5L11 16" stroke="#1878d0" stroke-width="1.6"/></svg>
<div class="a" style="left:1057px;top:766px;width:39px;height:2px;background:#78b4e4"></div>
<svg class="a" style="left:1104px;top:744px" width="14" height="8"><path d="M0.7 7L7 0.9L13.3 7" stroke="#fff" stroke-width="1.2" fill="none"/></svg>
<svg class="a" style="left:1129px;top:739px" width="14" height="18"><path d="M3 2.5C5 1 8 1 10 2.5M3 15.5C5 17 8 17 10 15.5" stroke="#fff" stroke-width="1.1" fill="none"/><rect x="1.5" y="5" width="8" height="8" rx="1.5" stroke="#fff" stroke-width="1.2" fill="none"/><path d="M9.5 8L12.5 6V12L9.5 10" stroke="#fff" stroke-width="1.1" fill="none"/></svg>
<svg class="a" style="left:1150px;top:741px" width="18" height="16"><path d="M2 12C0 12 0 8 2.5 7.5C3 4 6 3 8 4.5C9 1.5 13.5 1.5 14.5 5C16 5 17 7 16 9L11 13H3Z" fill="#c8c8c0"/><path d="M2 12C0 12 0 8 2.5 7.5C3 6 4 5.5 5 5.5C4 8 5 11 7 13H3Z" fill="#e8e8e0"/><circle cx="12" cy="11.5" r="4.3" fill="#8a8a86"/><path d="M10.8 9.5V13.5M13.2 9.5V13.5" stroke="#fff" stroke-width="1.1"/></svg>
<svg class="a" style="left:1175px;top:743px" width="18" height="11"><rect x="1.2" y="1.2" width="13.3" height="8.5" stroke="#fff" stroke-width="1.3" fill="none"/><rect x="3" y="3" width="6" height="5" fill="#fff"/><rect x="15" y="3.5" width="1.8" height="4" fill="#fff"/></svg>
<svg class="a" style="left:1201px;top:742px" width="15" height="14"><path d="M1 13C1 6 6 1 13.5 1M3.5 13C3.5 7.5 7.5 3.5 13.5 3.5M6 13C6 9 9 6 13.5 6M8.5 13C8.5 10.5 10.5 8.5 13.5 8.5" stroke="#fff" stroke-width="1" fill="none"/><circle cx="12" cy="12" r="1.4" fill="#fff"/></svg>
<svg class="a" style="left:1222px;top:740px" width="18" height="16"><path d="M1 5H4.5L9 1.5V14.5L4.5 11H1Z" stroke="#fff" stroke-width="1.1" fill="none"/><path d="M11 5.5C12 6.5 12 9.5 11 10.5M13 3.5C15 5.5 15 10.5 13 12.5M15 1.5C18 4.5 18 11.5 15 14.5" stroke="#fff" stroke-width="1.1" fill="none"/></svg>
<div class="a" style="left:1262px;top:732px;width:32px;font-size:12px;line-height:14px;color:#fff;letter-spacing:-0.4px;text-align:center">16:47</div>
<div class="a" style="left:1246px;top:750px;width:62px;font-size:12px;line-height:14px;color:#fff;letter-spacing:-0.35px;text-align:center">20/05/2021</div>
<svg class="a" style="left:1324px;top:739px" width="18" height="18"><path d="M1 1H16.5V12.5H10.5L8.7 14.7L6.9 12.5H1Z" stroke="#fff" stroke-width="1.2" fill="none"/></svg>
<div class="a" style="left:1361px;top:728px;width:1px;height:40px;background:#7a8090"></div>
</body></html>
